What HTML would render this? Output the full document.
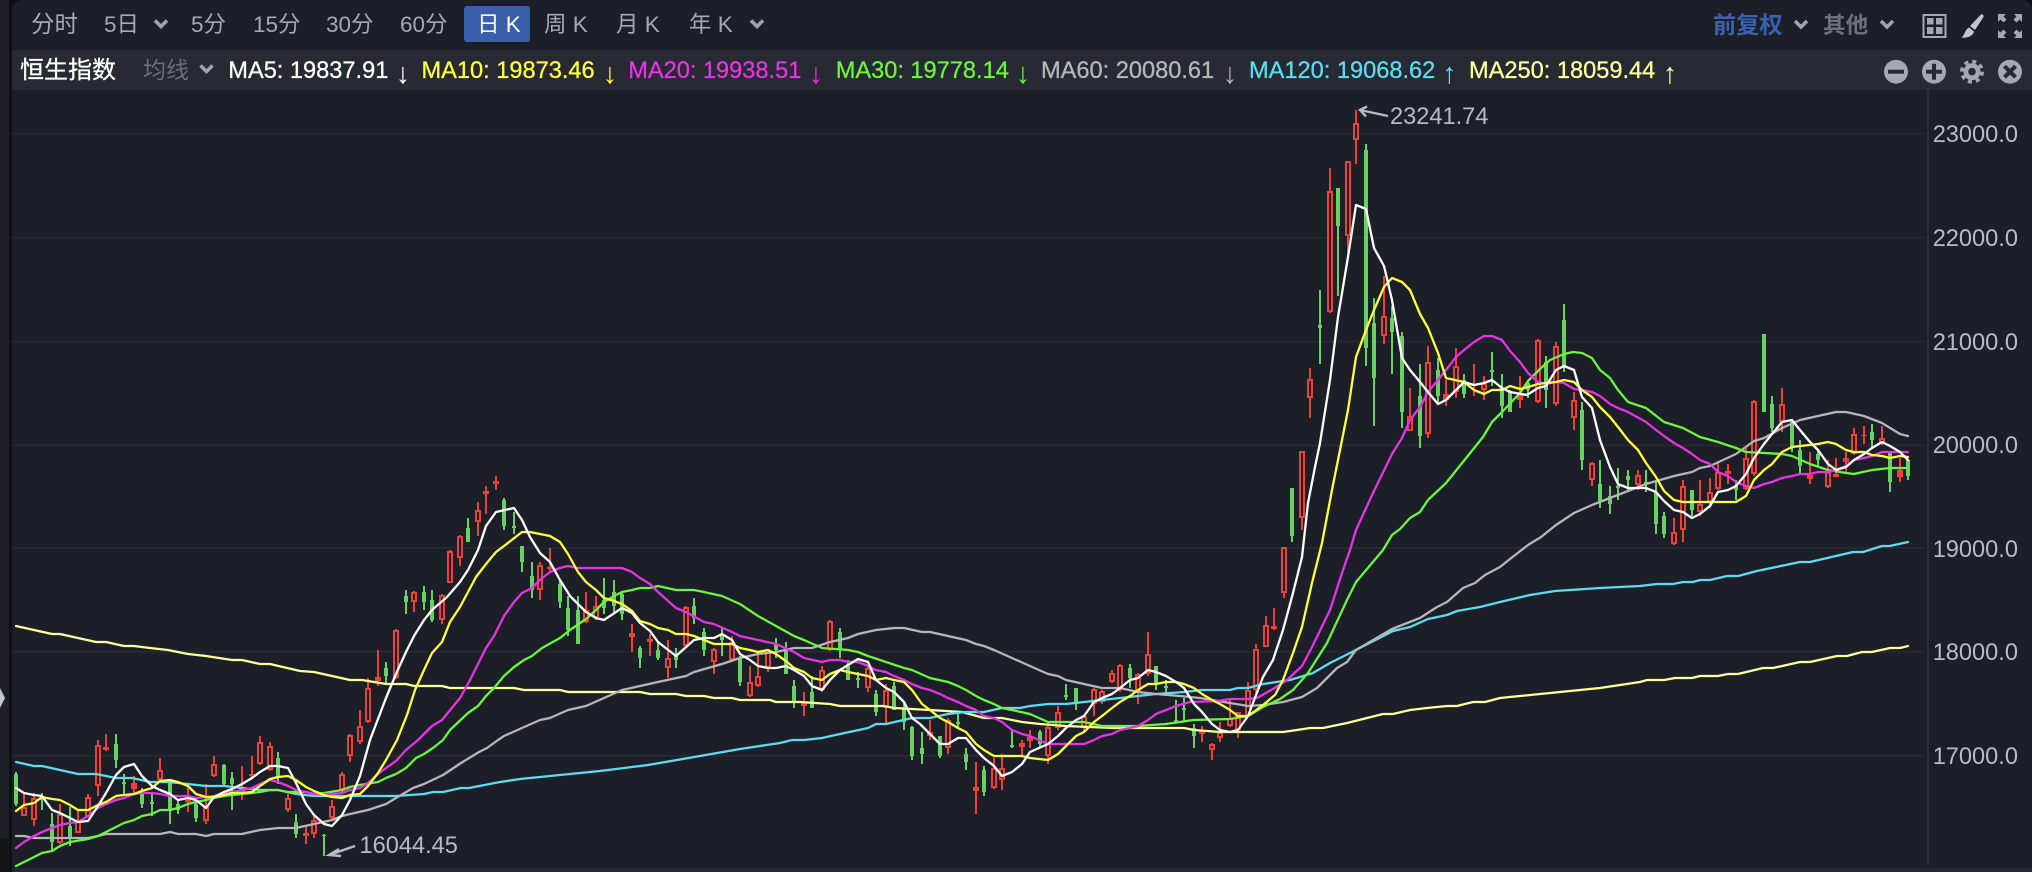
<!DOCTYPE html>
<html lang="zh">
<head>
<meta charset="utf-8">
<title>恒生指数</title>
<style>
html,body{margin:0;padding:0;width:2032px;height:872px;overflow:hidden;background:#0e1014}
svg{display:block}
text{font-family:"Liberation Sans","Noto Sans CJK SC",sans-serif;white-space:pre}
.t{font-size:22.5px;fill:#a6a9b2}
.m{font-size:23.6px;stroke-width:.3px}
.r{font-size:29px}
.a{font-size:23.6px;fill:#b9bbc5}
polyline{fill:none;stroke-linejoin:round;stroke-linecap:round;stroke-width:2.3px}
</style>
</head>
<body>
<svg width="2032" height="872" viewBox="0 0 2032 872" xmlns="http://www.w3.org/2000/svg">
<rect width="2032" height="872" fill="#0e1014"/>
<rect x="0" y="0" width="9" height="838" fill="#1e2027"/>
<rect x="0" y="838" width="9" height="34" fill="#14161a"/>
<rect x="12" y="0" width="2020" height="872" rx="10" fill="#1c1f28"/>
<rect x="12" y="20" width="2020" height="852" fill="#1c1f28"/>
<rect x="12" y="50" width="2020" height="40" fill="#272933"/>
<rect x="12" y="868" width="2020" height="4" fill="#272933"/>
<path d="M0 688L5 698L0 708Z" fill="#c5c6ca"/>

<!-- grid -->
<path d="M12 133.7H1925M12 237.7H1925M12 341.7H1925M12 445.5H1925M12 548H1925M12 651.7H1925M12 755.7H1925" stroke="#25282f" stroke-width="2" fill="none"/>
<path d="M1928 90V866" stroke="#2b2e37" stroke-width="2" fill="none"/>

<!-- toolbar -->
<rect x="464" y="6" width="66" height="36" rx="3" fill="#3a5ea9"/>
<text class="t" x="31" y="32" style="font-size:23.5px">分时</text>
<text class="t" x="104" y="32">5日</text>
<text class="t" x="191" y="32">5分</text>
<text class="t" x="253" y="32">15分</text>
<text class="t" x="326" y="32">30分</text>
<text class="t" x="400" y="32">60分</text>
<text class="t" x="477" y="32" style="fill:#fff">日 K</text>
<text class="t" x="544" y="32">周 K</text>
<text class="t" x="616" y="32">月 K</text>
<text class="t" x="689" y="32">年 K</text>
<path d="M155 20.5L161 26.5L167 20.5M751 20.5L757 26.5L763 20.5M1795 21L1801 27L1807 21M1881 21L1887 27L1893 21M200.5 65.5L206.5 71.5L212.5 65.5" fill="none" stroke="#a0a3ac" stroke-width="3.6"/>
<text x="1713" y="33" style="font-size:23.2px;font-weight:700;fill:#3a62b0">前复权</text>
<text x="1823" y="33" style="font-size:22.6px;font-weight:700;fill:#6e7178">其他</text>

<!-- right icons top -->
<rect x="1923.5" y="15" width="22" height="22" fill="none" stroke="#a5a8b0" stroke-width="2"/>
<path d="M1927 18h6.5v6.5h-6.5zM1936 18h6.5v6.5h-6.5zM1927 27h6.5v7h-6.5zM1936 27h6.5v7h-6.5z" fill="#a5a8b0"/>
<path d="M1981 14.5Q1984 14 1983.5 17L1975 30L1970 26Z" fill="#c3c4d0"/>
<path d="M1969 27.5L1974 31.5C1973 36 1967 38.5 1961.5 37.5C1965 35 1964.5 30 1969 27.5Z" fill="#c3c4d0"/>
<path d="M1998 14H2006L2003.5 16.5L2006.5 19.5L2003.5 22.5L2000.5 19.5L1998 22ZM2022 14H2014L2016.5 16.5L2013.5 19.5L2016.5 22.5L2019.5 19.5L2022 22ZM1998 38H2006L2003.5 35.5L2006.5 32.5L2003.5 29.5L2000.5 32.5L1998 30ZM2022 38H2014L2016.5 35.5L2013.5 32.5L2016.5 29.5L2019.5 32.5L2022 30Z" fill="#a5a8b0"/>

<!-- legend row -->
<text x="20" y="78" style="font-size:24px;fill:#fff;stroke:#fff;stroke-width:.3px">恒生指数</text>
<text x="143" y="78" style="font-size:23px;fill:#6b6e76">均线</text>
<text class="m" x="228.3" y="78" fill="#ffffff" stroke="#ffffff">MA5: 19837.91</text><text class="r" x="395.7" y="83" fill="#ffffff">↓</text>
<text class="m" x="421.5" y="78" fill="#ffff3c" stroke="#ffff3c">MA10: 19873.46</text><text class="r" x="602.7" y="83" fill="#ffff3c">↓</text>
<text class="m" x="628.2" y="78" fill="#e633e6" stroke="#e633e6">MA20: 19938.51</text><text class="r" x="808.7" y="83" fill="#e633e6">↓</text>
<text class="m" x="835.7" y="78" fill="#6bf53c" stroke="#6bf53c">MA30: 19778.14</text><text class="r" x="1015.7" y="83" fill="#6bf53c">↓</text>
<text class="m" x="1041" y="78" fill="#b6b6ba" stroke="#b6b6ba">MA60: 20080.61</text><text class="r" x="1222.7" y="83" fill="#b6b6ba">↓</text>
<text class="m" x="1249" y="78" fill="#5cdcf0" stroke="#5cdcf0">MA120: 19068.62</text><text class="r" x="1442.2" y="83" fill="#5cdcf0">↑</text>
<text class="m" x="1469" y="78" fill="#ffff99" stroke="#ffff99">MA250: 18059.44</text><text class="r" x="1662.7" y="83" fill="#ffff99">↑</text>

<!-- row icons -->
<circle cx="1896" cy="71.7" r="12" fill="#a5a8b0"/><rect x="1888" y="69.7" width="16" height="4" fill="#272933"/>
<circle cx="1934" cy="71.7" r="12" fill="#a5a8b0"/><path d="M1926 71.7H1942M1934 63.7V79.7" stroke="#272933" stroke-width="4"/>
<circle cx="1972" cy="71.7" r="8.5" fill="#a5a8b0"/><circle cx="1972" cy="71.7" r="10.2" fill="none" stroke="#a5a8b0" stroke-width="3.6" stroke-dasharray="4 4"/><circle cx="1972" cy="71.7" r="3.8" fill="#272933"/>
<circle cx="2010" cy="71.7" r="12" fill="#a5a8b0"/><path d="M2004.5 66.2L2015.5 77.2M2015.5 66.2L2004.5 77.2" stroke="#272933" stroke-width="4"/>

<!-- axis labels -->
<text class="a" x="1932.7" y="142">23000.0</text>
<text class="a" x="1932.7" y="246">22000.0</text>
<text class="a" x="1932.7" y="350">21000.0</text>
<text class="a" x="1932.7" y="453">20000.0</text>
<text class="a" x="1932.7" y="557">19000.0</text>
<text class="a" x="1932.7" y="660">18000.0</text>
<text class="a" x="1932.7" y="764">17000.0</text>

<!-- red wicks -->
<path fill="none" stroke="#ee4034" stroke-width="2" d="M24 793V816M34 793V826M60 804V844M78 810V833M88 794V817M98 740V796M106 734V751M134 776V793M160 758V781M188 786V812M206 784V824M214 756V777M242 766V800M252 756V777M260 736V765M270 742V771M288 794V812M306 826V844M314 816V838M332 800V820M342 772V792M350 734V762M360 710V744M368 678V723M378 650V686M396 629V679M414 591V612M442 594V624M450 550V583M460 535V566M478 502V536M486 486V514M496 476V490M540 562V600M550 548V572M586 592V623M596 596V620M632 624V652M650 634V656M668 640V678M686 606V647M714 648V674M732 636V661M750 666V697M758 654V687M768 650V672M804 692V716M822 666V692M830 620V651M868 666V692M886 684V724M930 720V740M948 718V754M976 762V814M994 758V789M1002 754V790M1022 740V756M1030 730V748M1048 726V764M1058 706V730M1084 716V732M1094 688V716M1102 690V704M1112 670V683M1120 664V692M1138 673V704M1148 632V676M1202 726V742M1212 743V760M1220 722V742M1230 700V727M1238 712V738M1248 682V716M1256 644V693M1266 616V647M1274 608V630M1284 547V598M1302 451V530M1310 368V418M1330 168V313M1348 161V253M1356 110V164M1384 276V344M1410 388V431M1428 346V438M1446 380V406M1456 348V398M1474 364V396M1484 376V400M1520 376V408M1538 339V403M1556 342V406M1574 392V430M1592 462V486M1638 470V490M1674 518V545M1683 480V542M1700 480V516M1710 478V508M1718 462V490M1728 464V484M1746 448V490M1754 400V476M1782 388V432M1810 452V484M1828 460V488M1836 458V477M1846 452V472M1854 428V455M1864 426V444M1882 426V445M1900 458V482"/>
<!-- red bodies -->
<path fill="none" stroke="#ee4034" stroke-width="6" d="M24 807V816M34 798V820M60 814V843M78 820V833M88 797V817M98 745V786M106 747V750M134 783V789M160 770V780M188 800V802M206 806V821M214 764V776M242 787V793M252 774V776M260 742V764M270 746V770M288 798V810M306 833V836M314 820V834M332 806V818M342 774V790M350 735V756M360 726V742M368 688V722M378 677V681M396 630V678M414 592V602M442 595V620M450 551V583M460 536V558M478 510V522M486 491V494M496 481V484M540 565V590M550 567V569M586 610V622M596 606V618M632 633V637M650 639V642M668 658V668M686 607V646M714 649V662M732 642V660M750 682V696M758 676V686M768 652V668M804 702V706M822 670V690M830 621V650M868 668V688M886 690V708M930 732V736M948 720V748M976 787V791M994 768V788M1002 768V780M1022 743V747M1030 737V741M1048 727V756M1058 712V728M1084 716V728M1094 689V704M1102 691V702M1112 673V682M1120 665V690M1138 674V692M1148 654V674M1202 732V734M1212 744V750M1220 732V738M1230 718V726M1238 712V730M1248 690V716M1256 649V690M1266 625V647M1274 626V629M1284 547V593M1302 451V518M1310 379V398M1330 191V312M1348 161V236M1356 123V140M1384 316V336M1410 416V431M1428 362V434M1446 394V400M1456 366V392M1474 384V386M1484 383V390M1520 394V400M1538 340V402M1556 346V404M1574 400V418M1592 463V480M1638 475V485M1674 532V544M1683 486V530M1700 504V512M1710 492V502M1718 472V489M1728 471V474M1746 458V489M1754 401V474M1782 404V422M1810 475V479M1828 472V487M1836 474V477M1846 458V462M1854 434V454M1864 435V436M1882 438V444M1900 470V477"/>
<!-- red hollows -->
<path fill="none" stroke="#1c1f28" stroke-width="2" d="M24 809V814M34 800V818M60 816V841M78 822V831M88 799V815M98 747V784M160 772V778M206 808V819M214 766V774M242 789V791M260 744V762M270 748V768M288 800V808M314 822V832M332 808V816M342 776V788M350 737V754M360 728V740M368 690V720M396 632V676M414 594V600M442 597V618M450 553V581M460 538V556M478 512V520M540 567V588M586 612V620M596 608V616M668 660V666M686 609V644M714 651V660M732 644V658M750 684V694M758 678V684M768 654V666M822 672V688M830 623V648M868 670V686M886 692V706M948 722V746M994 770V786M1002 770V778M1048 729V754M1058 714V726M1084 718V726M1094 691V702M1102 693V700M1112 675V680M1120 667V688M1138 676V690M1148 656V672M1212 746V748M1220 734V736M1230 720V724M1238 714V728M1248 692V714M1256 651V688M1266 627V645M1284 549V591M1302 453V516M1310 381V396M1330 193V310M1348 163V234M1356 125V138M1384 318V334M1410 418V429M1428 364V432M1456 368V390M1484 385V388M1538 342V400M1556 348V402M1574 402V416M1592 465V478M1638 477V483M1674 534V542M1683 488V528M1700 506V510M1710 494V500M1718 474V487M1746 460V487M1754 403V472M1782 406V420M1828 474V485M1854 436V452M1882 440V442"/>
<!-- green wicks -->
<path fill="none" stroke="#67d262" stroke-width="2" d="M16 772V806M42 793V810M52 813V850M70 807V846M116 734V768M124 774V796M142 788V808M152 792V816M170 782V824M178 800V814M196 802V822M224 764V787M232 772V810M278 752V784M296 814V838M324 834V856M386 662V684M406 590V614M424 586V610M432 590V622M468 518V542M504 498V530M514 512V534M522 546V572M532 562V598M560 580V608M568 596V636M578 596V644M604 578V614M614 580V612M622 592V620M640 646V668M658 642V660M676 648V668M694 598V624M704 628V656M722 628V656M740 656V686M776 638V658M786 642V674M794 680V708M812 676V708M840 628V658M848 660V680M858 672V688M876 690V716M894 682V710M904 702V730M912 726V760M922 732V764M940 736V758M958 714V728M966 748V770M984 766V796M1012 730V748M1040 730V748M1066 684V700M1076 688V710M1130 664V688M1156 666V690M1166 680V696M1176 700V722M1184 698V722M1194 724V748M1292 488V542M1320 290V364M1338 188V296M1366 144V366M1374 298V426M1392 306V374M1402 332V428M1420 364V448M1438 358V404M1464 374V398M1492 352V386M1502 374V418M1510 390V412M1528 380V398M1546 356V408M1564 304V372M1582 402V470M1600 460V508M1610 486V514M1618 468V500M1628 470V490M1646 470V492M1656 480V534M1664 512V538M1692 490V516M1736 480V500M1764 334V412M1772 396V432M1792 420V452M1800 440V474M1818 450V466M1872 424V448M1890 452V492M1908 460V480"/>
<!-- green bodies -->
<path fill="none" stroke="#67d262" stroke-width="4" d="M16 774V804M42 797V800M52 824V842M70 826V837M116 744V760M124 782V784M142 793V804M152 802V804M170 783V810M178 804V810M196 804V818M224 765V784M232 778V784M278 758V778M296 822V834M324 835V836M386 668V676M406 596V602M424 592V602M432 600V620M468 528V542M504 500V526M514 526V528M522 546V562M532 576V590M560 584V602M568 608V630M578 610V644M604 600V608M614 592V606M622 594V614M640 648V658M658 650V658M676 654V660M694 606V618M704 632V650M722 634V640M740 658V682M776 644V650M786 650V674M794 686V702M812 692V708M840 632V650M848 666V680M858 678V680M876 694V712M894 686V710M904 708V722M912 727V756M922 748V754M940 736V756M958 722V724M966 754V762M984 770V792M1012 745V747M1040 732V744M1066 695V697M1076 688V704M1130 668V678M1156 666V684M1166 686V688M1176 720V722M1184 708V710M1194 728V736M1292 488V536M1320 325V328M1338 188V226M1366 150V348M1374 323V378M1392 318V332M1402 336V412M1420 396V436M1438 370V396M1464 380V394M1492 370V372M1502 388V406M1510 392V412M1528 383V390M1546 362V390M1564 320V368M1582 410V460M1600 484V502M1610 496V504M1618 486V488M1628 476V480M1646 482V484M1656 492V524M1664 516V534M1692 490V510M1736 486V490M1764 334V412M1772 404V428M1792 422V448M1800 450V466M1818 454V460M1872 432V440M1890 452V482M1908 460V476"/>

<!-- MA250 -->
<polyline stroke="#ffff99" points="16,626 34,630 52,634 60,634 78,638 96,642 106,642 124,646 134,646 150,648 168,650 188,654 206,656 232,660 242,660 260,664 270,664 300,671 314,672 350,680 362,680 386,684 406,684 414,686 442,686 450,688 514,688 524,690 560,690 568,692 640,692 650,694 676,694 686,696 704,696 714,698 732,698 740,700 770,700 776,702 800,702 830,704 840,706 884,706 894,708 930,710 962,712 984,718 1002,718 1022,722 1040,724 1066,726 1113,728 1184,728 1194,730 1220,732 1283,732 1297,730 1310,728 1323,728 1347,723 1383,714 1393,714 1410,710 1427,708 1447,706 1457,706 1473,702 1485,702 1500,698 1520,696 1560,692 1600,688 1640,682 1647,680 1664,680 1675,678 1692,678 1700,676 1718,676 1728,674 1738,674 1763,668 1773,668 1800,662 1810,662 1837,656 1847,656 1862,652 1872,652 1890,648 1900,648 1908,646"/>
<!-- MA120 -->
<polyline stroke="#5cdcf0" points="16,762 34,766 42,766 78,774 96,774 106,776 116,778 132,778 150,782 168,782 188,784 206,786 224,786 242,788 260,790 278,790 296,794 314,796 350,796 396,796 424,794 433,792 443,792 461,788 469,788 500,782 520,779 560,775 600,771 648,765 700,756 740,749 780,743 792,740 804,740 822,738 840,734 868,728 876,724 886,724 912,718 930,718 948,714 966,712 984,712 1002,708 1020,708 1030,706 1048,704 1066,704 1084,702 1102,700 1120,698 1138,696 1156,694 1184,692 1202,690 1230,690 1238,688 1248,688 1263,684 1290,680 1313,673 1330,663 1350,653 1393,631 1410,627 1428,619 1447,615 1457,611 1480,607 1500,602 1530,595 1555,591 1600,588 1640,586 1657,584 1673,584 1683,582 1693,582 1700,580 1710,580 1727,576 1738,576 1757,571 1800,562 1810,562 1853,552 1863,552 1882,546 1890,546 1908,542"/>
<!-- MA60 -->
<polyline stroke="#b6b6ba" points="16,836 24,836 34,838 52,838 88,838 98,836 106,834 160,834 170,832 178,834 196,834 206,836 214,834 242,834 260,830 278,828 296,828 314,824 332,820 342,816 350,814 368,810 386,804 396,798 413,788 424,784 443,775 461,763 479,752 487,748 498,740 504,736 522,728 540,720 550,718 568,710 586,706 604,698 622,690 640,686 658,682 686,676 694,672 722,664 740,658 758,654 776,652 794,648 812,648 830,642 848,638 858,634 876,630 894,628 904,628 922,632 930,632 948,636 966,640 976,644 984,646 994,650 1012,658 1030,666 1048,674 1058,676 1066,680 1084,684 1102,688 1120,688 1138,692 1156,694 1180,696 1200,698 1230,703 1248,706 1263,705 1283,702 1302,697 1317,688 1337,668 1347,662 1356,650 1392,629 1420,618 1437,607 1447,602 1463,588 1475,583 1485,575 1500,567 1510,559 1528,545 1541,537 1556,525 1574,513 1592,505 1610,498 1628,491 1646,484 1674,476 1692,472 1700,468 1710,466 1736,454 1754,441 1764,438 1782,428 1800,420 1818,416 1836,412 1846,412 1864,416 1882,423 1900,434 1908,436"/>
<!-- MA30 -->
<polyline stroke="#6bf53c" points="16,866 34,857 42,853 52,851 60,846 70,842 88,839 98,836 106,832 116,827 124,823 134,820 142,816 152,814 160,810 170,810 178,808 188,804 196,802 206,800 214,798 224,796 232,795 252,793 260,792 270,790 278,790 288,792 306,792 314,794 324,793 342,790 350,787 360,785 378,782 386,778 396,774 406,768 416,758 424,754 433,748 443,740 450,730 468,713 478,706 486,696 494,688 504,676 514,667 524,660 532,656 542,648 560,638 570,630 586,619 596,610 604,602 614,596 622,592 632,590 640,588 650,588 658,586 676,590 694,590 704,592 722,596 740,604 758,616 776,626 794,636 804,640 822,648 848,650 858,652 868,656 886,662 904,668 912,670 930,678 948,682 958,686 966,690 976,696 984,700 994,704 1002,708 1012,710 1030,714 1048,722 1084,722 1102,726 1138,726 1166,724 1180,722 1193,720 1230,719 1248,716 1263,707 1280,699 1293,690 1308,673 1327,643 1347,600 1356,582 1383,550 1392,535 1400,529 1410,518 1420,512 1428,500 1446,483 1483,437 1492,422 1502,412 1520,393 1528,381 1540,369 1550,360 1564,354 1573,352 1582,353 1592,358 1600,370 1610,378 1618,390 1628,402 1646,408 1664,422 1683,428 1700,437 1718,442 1736,448 1746,452 1782,454 1792,456 1810,464 1828,470 1846,473 1854,474 1872,470 1890,468 1908,468"/>
<!-- MA20 -->
<polyline stroke="#e633e6" points="16,848 24,842 34,836 42,832 52,828 60,825 70,823 78,822 88,816 98,808 106,804 116,800 124,798 134,794 142,793 152,793 160,794 170,796 188,796 196,798 206,797 214,796 224,794 232,792 242,790 252,788 260,784 270,780 278,782 288,786 296,790 306,792 314,794 332,794 342,793 350,790 360,788 368,783 378,774 386,768 396,761 406,750 418,740 432,726 442,720 460,698 470,680 478,664 486,648 494,636 504,616 514,602 522,593 532,588 540,580 550,572 560,568 568,566 578,568 622,568 632,572 640,578 650,584 658,592 676,608 686,612 704,622 714,624 732,632 740,636 758,640 776,644 794,652 804,658 822,662 830,660 840,660 848,662 858,662 868,666 876,670 886,672 894,676 904,680 912,684 922,688 930,690 940,694 948,698 958,702 966,706 976,710 984,716 994,718 1002,722 1012,730 1022,734 1030,736 1048,744 1084,744 1094,740 1102,736 1112,734 1120,730 1130,728 1138,726 1148,720 1156,714 1166,710 1176,706 1190,702 1217,701 1230,699 1248,699 1257,698 1273,689 1287,680 1302,666 1312,647 1330,610 1343,570 1350,550 1356,530 1373,493 1392,454 1402,438 1410,420 1420,407 1428,392 1438,380 1446,370 1456,357 1464,350 1474,342 1484,336 1492,336 1502,340 1510,351 1520,362 1528,373 1538,382 1546,384 1556,382 1564,383 1574,389 1582,390 1592,392 1600,396 1610,404 1618,408 1628,412 1646,422 1656,430 1664,436 1674,443 1683,448 1692,454 1700,460 1710,464 1718,472 1728,476 1736,482 1746,486 1754,488 1764,484 1772,482 1782,478 1792,476 1800,474 1810,474 1818,472 1828,472 1836,470 1846,466 1854,460 1864,458 1872,456 1882,452 1890,452 1908,452"/>
<!-- MA10 -->
<polyline stroke="#ffff3c" points="16,811 24,805 34,803 42,797 52,799 60,800 70,805 78,810 88,810 98,805 106,802 116,796 124,795 134,794 142,791 152,788 160,781 170,780 178,782 188,786 196,794 206,797 214,797 224,795 232,793 242,793 252,792 260,786 270,779 278,777 288,776 296,780 306,787 314,791 324,795 332,797 342,798 350,795 360,794 368,786 378,773 386,760 397,740 407,715 415,690 424,670 432,653 442,642 450,622 460,607 468,592 476,577 486,564 496,552 504,546 522,532 530,532 550,536 560,542 568,554 578,572 586,582 596,590 604,598 614,601 622,604 632,611 640,621 650,624 658,628 668,630 676,634 686,634 694,636 704,640 714,644 732,644 740,648 750,650 758,652 768,650 776,654 786,661 794,668 804,672 812,678 822,680 830,674 840,670 848,672 858,674 868,676 876,680 886,678 894,680 904,682 912,690 922,704 930,710 940,718 948,722 958,728 966,732 976,744 984,750 994,756 1022,756 1030,758 1048,760 1058,754 1066,746 1076,736 1084,732 1094,722 1102,716 1112,708 1120,702 1130,696 1138,690 1148,684 1156,684 1166,682 1176,682 1184,684 1194,688 1202,694 1212,700 1220,704 1230,710 1238,716 1248,716 1263,705 1275,695 1283,680 1293,653 1302,627 1312,583 1322,543 1332,490 1348,410 1356,357 1366,330 1374,310 1384,287 1392,278 1402,282 1410,290 1420,314 1428,328 1438,353 1446,378 1464,382 1474,390 1484,394 1492,390 1502,390 1510,386 1520,389 1528,387 1538,384 1546,383 1556,382 1564,380 1574,382 1582,390 1592,397 1600,407 1610,417 1618,427 1628,440 1638,450 1646,463 1656,477 1664,491 1674,500 1683,502 1736,502 1746,496 1754,480 1764,470 1772,464 1782,452 1792,447 1800,446 1810,445 1818,444 1828,442 1836,444 1846,450 1854,452 1864,452 1872,455 1882,456 1890,458 1900,456 1908,457"/>
<!-- MA5 -->
<polyline stroke="#ffffff" points="16,788 24,793 34,795 42,796 52,810 60,813 70,818 78,822 88,821 98,806 106,793 116,775 124,767 134,764 142,776 152,786 160,790 170,794 178,800 188,798 196,800 206,808 214,797 224,792 232,789 242,784 252,778 260,772 270,766 278,766 288,768 296,783 306,804 314,815 324,824 332,826 342,815 350,800 360,776 370,740 386,698 396,674 406,652 414,636 424,620 432,610 447,597 460,582 468,570 478,550 486,526 496,512 514,508 522,520 530,537 540,553 550,562 560,580 570,596 586,612 596,618 604,620 622,608 632,613 640,623 650,631 658,642 676,656 694,640 704,638 714,638 722,634 732,640 740,654 750,660 758,666 768,668 776,668 786,666 794,670 804,676 812,686 822,690 830,680 840,670 848,665 858,659 868,662 876,680 886,688 894,692 904,702 912,718 920,724 930,734 940,744 948,744 958,738 966,738 976,750 984,758 994,766 1002,776 1012,772 1022,764 1030,752 1048,744 1058,736 1066,728 1076,720 1084,716 1094,702 1102,698 1112,694 1120,688 1130,680 1138,678 1148,670 1156,672 1166,676 1176,682 1184,688 1194,704 1202,712 1212,724 1220,730 1230,732 1238,730 1248,716 1263,677 1273,660 1283,630 1293,593 1302,557 1308,503 1315,467 1320,443 1330,380 1338,317 1348,257 1356,205 1366,209 1374,248 1384,266 1392,300 1402,358 1410,370 1420,382 1428,392 1438,404 1446,400 1464,382 1474,385 1484,383 1492,380 1502,388 1510,392 1527,395 1538,388 1546,386 1556,370 1564,366 1574,370 1582,397 1592,408 1600,440 1610,467 1618,484 1628,488 1646,488 1656,492 1664,501 1674,510 1683,512 1692,518 1700,514 1710,506 1718,492 1728,490 1736,486 1746,474 1754,458 1764,444 1772,434 1782,422 1792,420 1800,430 1810,442 1818,450 1828,464 1836,470 1846,467 1854,460 1864,454 1872,448 1882,442 1890,446 1900,452 1908,460"/>

<!-- extreme labels -->
<path d="M1388 116L1360 110M1367 106.5L1360 110L1366 116.5" fill="none" stroke="#b9bbc5" stroke-width="2.4"/>
<text class="a" x="1390" y="124" style="font-size:23.6px">23241.74</text>
<path d="M355 846L329 855M339 849L329 855L341 856" fill="none" stroke="#b9bbc5" stroke-width="2.4"/>
<text class="a" x="359.5" y="853" style="font-size:23.6px">16044.45</text>
</svg>
</body>
</html>
